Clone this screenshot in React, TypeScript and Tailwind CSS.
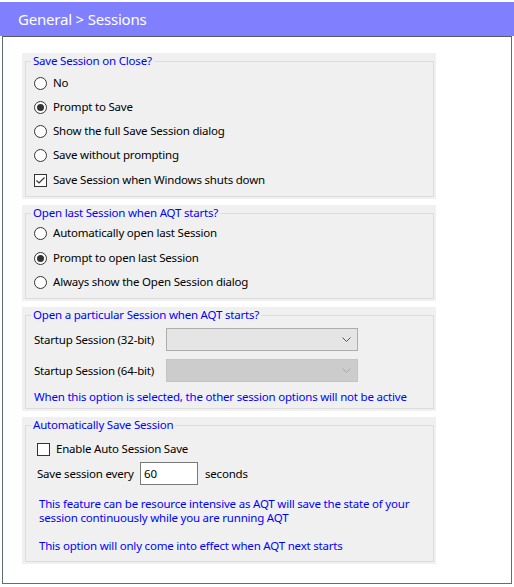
import React from "react";

const Radio = ({ checked, label }: { checked?: boolean; label: string }) => (
  <div className="flex items-center h-6">
    <span className="w-[13px] h-[13px] rounded-full border border-[#333333] bg-white flex items-center justify-center">
      {checked && <span className="w-[7px] h-[7px] rounded-full bg-[#333333]" />}
    </span>
    <span className="ml-[6px]">{label}</span>
  </div>
);

const Check = ({ checked, label }: { checked?: boolean; label: string }) => (
  <div className="flex items-center">
    <span className="w-[13px] h-[13px] border border-[#333333] bg-white flex items-center justify-center">
      {checked && (
        <svg width="11" height="11" viewBox="0 0 11 11">
          <polyline points="1.5,5.5 4,8 9.5,2.5" fill="none" stroke="#333333" strokeWidth="1.2" />
        </svg>
      )}
    </span>
    <span className="ml-[6px]">{label}</span>
  </div>
);

const Chevron = ({ color }: { color: string }) => (
  <svg width="9" height="5" viewBox="0 0 9 5">
    <polyline points="0.5,0.5 4.5,4.5 8.5,0.5" fill="none" stroke={color} strokeWidth="1" />
  </svg>
);

const Group = ({ title, children, className }: { title: string; children: React.ReactNode; className?: string }) => (
  <div className="w-[414px] bg-[#f0f0f0] pl-[3px] pr-[2px] pb-[2px]">
    <fieldset className="border border-[#dcdcdc]">
      <legend className="ml-[5px] px-[2px] h-4 leading-4 text-[#0000ff]">{title}</legend>
      <div className={className}>{children}</div>
    </fieldset>
  </div>
);

export default function App() {
  return (
    <div className="w-[514px] h-[587px] bg-white pt-[2px] font-['Segoe_UI','Noto_Sans',sans-serif] text-[11.5px] tracking-[-0.2px] text-black whitespace-nowrap">
      <div className="h-[34px] bg-[#8080ff] flex items-center pl-[18px] text-white text-[15px] tracking-[-0.2px]">
        General &gt; Sessions
      </div>
      <div className="ml-[2px] w-[510px] border border-[#5c7070] border-t-[#5a5a5a] pt-[16px] pl-[19px] pb-[19px] flex flex-col gap-[6px]">
        <Group title="Save Session on Close?" className="pl-2 pb-1">
          <div className="mt-[2px]">
            <Radio label="No" />
            <Radio checked label="Prompt to Save" />
            <Radio label="Show the full Save Session dialog" />
            <Radio label="Save without prompting" />
            <div className="h-6 mt-[1px] flex items-center">
              <Check checked label="Save Session when Windows shuts down" />
            </div>
          </div>
        </Group>
        <Group title="Open last Session when AQT starts?" className="pl-2 pb-1">
          <Radio label="Automatically open last Session" />
          <div className="mt-[1px]">
            <Radio checked label="Prompt to open last Session" />
          </div>
          <Radio label="Always show the Open Session dialog" />
        </Group>
        <Group title="Open a particular Session when AQT starts?" className="pl-2 pb-[3px]">
          <div className="mt-[5px] flex items-center h-[23px]">
            <span className="w-[132px]">Startup Session (32-bit)</span>
            <div className="w-[192px] h-[23px] bg-[#e5e5e5] border border-[#adadad] flex items-center justify-end pr-[6px]">
              <Chevron color="#555555" />
            </div>
          </div>
          <div className="mt-[8px] flex items-center h-[23px]">
            <span className="w-[132px]">Startup Session (64-bit)</span>
            <div className="w-[192px] h-[23px] bg-[#cccccc] border border-[#c4c4c4] flex items-center justify-end pr-[6px]">
              <Chevron color="#a8a8a8" />
            </div>
          </div>
          <div className="mt-[7px] h-4 leading-4 text-[#0000ff]">
            When this option is selected, the other session options will not be active
          </div>
        </Group>
        <Group title="Automatically Save Session" className="pl-[11px] pb-[8px]">
          <div className="mt-[6px] h-5 flex items-center">
            <Check label="Enable Auto Session Save" />
          </div>
          <div className="mt-[3px] flex items-center h-[23px]">
            <span className="w-[103px]">Save session every</span>
            <div className="w-[58px] h-[23px] bg-white border border-[#7a7a7a] flex items-center pl-[3px]">60</div>
            <span className="ml-[7px]">seconds</span>
          </div>
          <div className="mt-[12px] pl-[2px] leading-[14px] text-[#0000ff]">
            This feature can be resource intensive as AQT will save the state of your
            <br />
            session continuously while you are running AQT
          </div>
          <div className="mt-[14px] pl-[2px] leading-[14px] text-[#0000ff]">
            This option will only come into effect when AQT next starts
          </div>
        </Group>
      </div>
    </div>
  );
}
